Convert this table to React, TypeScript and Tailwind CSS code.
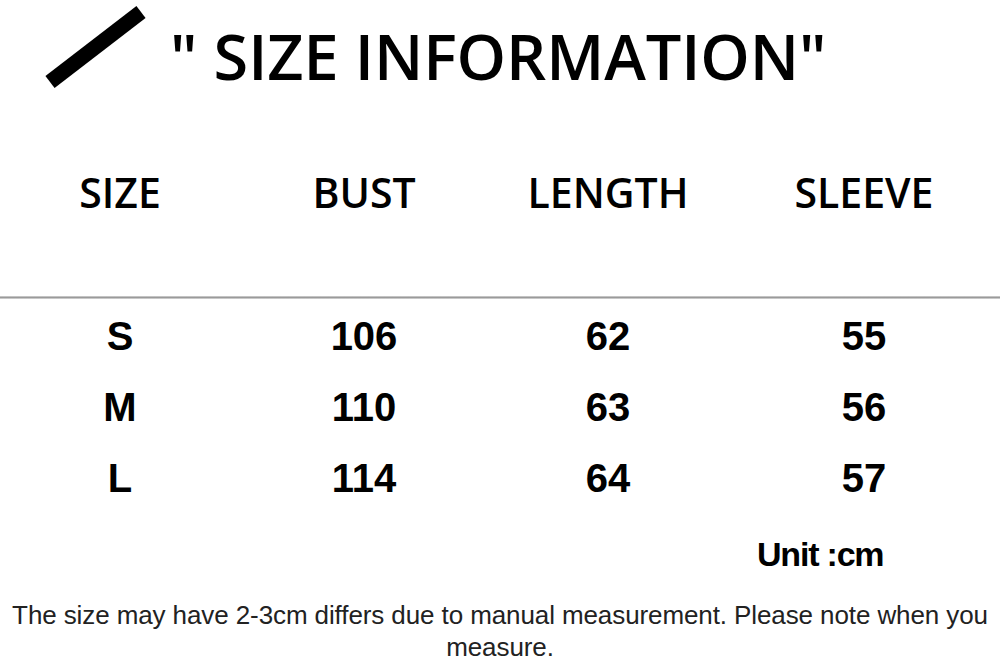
const headers = ['SIZE', 'BUST', 'LENGTH', 'SLEEVE'];

const rows = [
  ['S', '106', '62', '55'],
  ['M', '110', '63', '56'],
  ['L', '114', '64', '57'],
];

const cols = 'grid grid-cols-[240px_248px_240px_272px]';

export default function App() {
  return (
    <div className="w-[1000px] h-[664px] overflow-hidden bg-white text-black">
      <div className="flex items-center h-[100px] pl-[40px]">
        <svg width="112" height="90" viewBox="0 0 112 90" className="mt-[-6px]">
          <line x1="10" y1="80" x2="101" y2="10" stroke="#000" strokeWidth="15" />
        </svg>
        <h1 className="ml-[18px] mt-[10px] text-[63px] leading-none font-semibold tracking-[-0.1px] font-['Open_Sans',sans-serif]">
          " SIZE INFORMATION"
        </h1>
      </div>

      <div className={`${cols} h-[190px] pt-[72px] font-['Open_Sans',sans-serif] text-[41px] font-semibold leading-none`}>
        {headers.map((h) => (
          <div key={h} className="text-center">{h}</div>
        ))}
      </div>

      <div className="h-[3px] bg-gradient-to-b from-[#d8d8d8] via-[#9a9a9a] to-[#e0e0e0] mt-[6px]" />

      <div className="pt-[17px] font-['Liberation_Sans',Arial,sans-serif] font-bold text-[40px]">
        {rows.map((r) => (
          <div key={r[0]} className={`${cols} h-[71px] leading-[40px]`}>
            {r.map((c, i) => (
              <div key={i} className="text-center">{c}</div>
            ))}
          </div>
        ))}
      </div>

      <div className="pl-[757px] mt-[8px] text-[34px] leading-none font-bold font-['Liberation_Sans',Arial,sans-serif] tracking-[-1.2px]">
        Unit :cm
      </div>

      <p className="mt-[28px] px-[4px] text-center text-[26px] leading-[32px] text-[#222] font-['Liberation_Sans',Arial,sans-serif] tracking-[-0.1px]">
        The size may have 2-3cm differs due to manual measurement. Please note when you measure.
      </p>
    </div>
  );
}
